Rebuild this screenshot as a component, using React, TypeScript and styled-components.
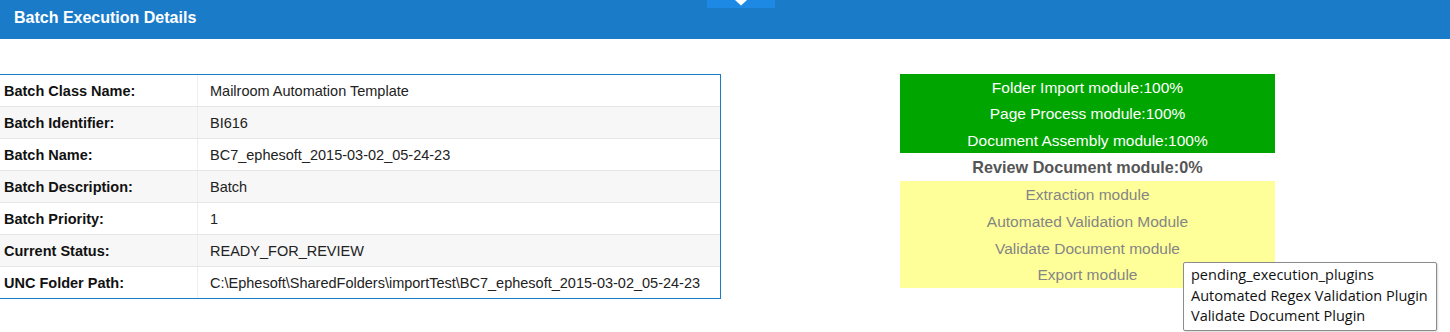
import React from 'react';
import styled, {createGlobalStyle} from 'styled-components';

type DetailType = {
    label: string
    value: string
}

type ModuleType = {
    name: string
    state: 'done' | 'current' | 'pending'
}

const details: DetailType[] = [
    {label: 'Batch Class Name:', value: 'Mailroom Automation Template'},
    {label: 'Batch Identifier:', value: 'BI616'},
    {label: 'Batch Name:', value: 'BC7_ephesoft_2015-03-02_05-24-23'},
    {label: 'Batch Description:', value: 'Batch'},
    {label: 'Batch Priority:', value: '1'},
    {label: 'Current Status:', value: 'READY_FOR_REVIEW'},
    {label: 'UNC Folder Path:', value: 'C:\\Ephesoft\\SharedFolders\\importTest\\BC7_ephesoft_2015-03-02_05-24-23'},
]

const modules: ModuleType[] = [
    {name: 'Folder Import module:100%', state: 'done'},
    {name: 'Page Process module:100%', state: 'done'},
    {name: 'Document Assembly module:100%', state: 'done'},
    {name: 'Review Document module:0%', state: 'current'},
    {name: 'Extraction module', state: 'pending'},
    {name: 'Automated Validation Module', state: 'pending'},
    {name: 'Validate Document module', state: 'pending'},
    {name: 'Export module', state: 'pending'},
]

const tooltipLines = ['pending_execution_plugins', 'Automated Regex Validation Plugin', 'Validate Document Plugin']

const App = () => {
    const done = modules.filter(m => m.state === 'done')
    const current = modules.filter(m => m.state === 'current')
    const pending = modules.filter(m => m.state === 'pending')

    return (
        <Page>
            <GlobalStyle/>
            <Header>
                <Title>Batch Execution Details</Title>
                <CollapseTab>
                    <svg width="14" height="7" viewBox="0 0 14 7">
                        <path d="M1 0 L7 5.5 L13 0 Z" fill="#ffffff"/>
                    </svg>
                </CollapseTab>
            </Header>
            <Content>
                <DetailsTable>
                    {details.map((d, i) => (
                        <Row key={d.label} striped={i % 2 === 1}>
                            <Label>{d.label}</Label>
                            <Value>{d.value}</Value>
                        </Row>
                    ))}
                </DetailsTable>
                <Progress>
                    <Block kind="done">
                        {done.map(m => <ModuleLine key={m.name} kind="done">{m.name}</ModuleLine>)}
                    </Block>
                    <Block kind="current">
                        {current.map(m => <ModuleLine key={m.name} kind="current">{m.name}</ModuleLine>)}
                    </Block>
                    <Block kind="pending">
                        {pending.map(m => <ModuleLine key={m.name} kind="pending">{m.name}</ModuleLine>)}
                    </Block>
                    <Tooltip>
                        {tooltipLines.map(t => <div key={t}>{t}</div>)}
                    </Tooltip>
                </Progress>
            </Content>
        </Page>
    )
}

export default App

const GlobalStyle = createGlobalStyle`
  body {
    margin: 0;
    background: #ffffff;
    font-family: "Liberation Sans", Arial, sans-serif;
  }
`

const Page = styled.div`
  min-height: 332px;
`
const Header = styled.div`
  position: relative;
  height: 39px;
  background-color: #1a7cc9;
  display: flex;
  align-items: center;
  padding-left: 14px;
`
const Title = styled.div`
  color: #ffffff;
  font-weight: bold;
  font-size: 16px;
  margin-top: -4px;
`
const CollapseTab = styled.div`
  position: absolute;
  left: 707px;
  top: 0;
  width: 68px;
  height: 8px;
  background-color: #1e88e5;
  display: flex;
  justify-content: center;
  align-items: flex-start;
`
const Content = styled.div`
  display: flex;
  align-items: flex-start;
  padding-top: 35px;
  gap: 179px;
`
const DetailsTable = styled.div`
  width: 720px;
  border: 1px solid #1a7cc9;
  border-left: none;
  display: flex;
  flex-direction: column;
`
const Row = styled.div<{ striped: boolean }>`
  display: grid;
  grid-template-columns: 198px 1fr;
  height: 32px;
  box-sizing: border-box;
  background-color: ${props => props.striped ? '#f7f7f7' : '#ffffff'};
  border-top: 1px solid #e6e6e6;
  font-size: 14.5px;
  &:first-child {
    border-top: none;
    height: 31px;
  }
`
const Label = styled.div`
  display: flex;
  align-items: center;
  padding: 1px 0 0 4px;
  font-weight: bold;
  color: #111;
  border-right: 1px solid #eeeeee;
`
const Value = styled.div`
  display: flex;
  align-items: center;
  padding: 1px 0 0 12px;
  color: #222;
`
const Progress = styled.div`
  position: relative;
  width: 375px;
  display: flex;
  flex-direction: column;
`
const Block = styled.div<{ kind: 'done' | 'current' | 'pending' }>`
  background-color: ${props => props.kind === 'done' ? '#00a500' : props.kind === 'pending' ? '#ffff99' : '#ffffff'};
  display: flex;
  flex-direction: column;
  padding: ${props => props.kind === 'current' ? '0 0 2px' : '0'};
`
const ModuleLine = styled.div<{ kind: 'done' | 'current' | 'pending' }>`
  height: ${props => props.kind === 'pending' ? '26.6px' : '26.3px'};
  box-sizing: border-box;
  display: flex;
  align-items: center;
  justify-content: center;
  padding-top: 2px;
  font-size: ${props => props.kind === 'current' ? '16.2px' : '15.5px'};
  font-weight: ${props => props.kind === 'current' ? 'bold' : 'normal'};
  color: ${props => props.kind === 'done' ? '#ffffff' : props.kind === 'current' ? '#555555' : '#858585'};
`
const Tooltip = styled.div`
  position: absolute;
  left: 283px;
  top: 188px;
  width: 254px;
  box-sizing: border-box;
  padding: 2px 6px 3px 7px;
  background: #ffffff;
  border: 1px solid #8c8c8c;
  border-radius: 2px;
  font-family: "Open Sans", "Noto Sans", sans-serif;
  font-size: 14.5px;
  line-height: 20.5px;
  color: #111;
  box-shadow: 1px 1px 2px rgba(0,0,0,0.15);
`
